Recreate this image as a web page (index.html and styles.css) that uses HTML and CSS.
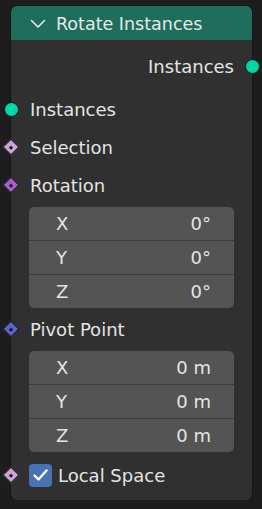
FILE: index.html
```html
<!DOCTYPE html>
<html lang="en">
<head>
    <meta charset="UTF-8">
    <meta name="viewport" content="width=device-width, initial-scale=1.0">
    <title>Rotate Instances</title>
    <link rel="stylesheet" href="styles.css">
</head>
<body>
    <div class="node">
        <div class="header">
            <svg class="chevron" width="16" height="10" viewBox="0 0 16 10">
                <path d="M1.5 1.5 L8 8 L14.5 1.5" fill="none" stroke="#e8e8e8" stroke-width="1.6" stroke-linecap="round" stroke-linejoin="round"/>
            </svg>
            <span class="title">Rotate Instances</span>
        </div>

        <div class="row output">
            <span>Instances</span>
            <span class="socket circle right"></span>
        </div>

        <div class="row first-input">
            <span class="socket circle left"></span>
            <span>Instances</span>
        </div>

        <div class="row">
            <span class="socket diamond left bool"></span>
            <span>Selection</span>
        </div>

        <div class="row">
            <span class="socket diamond left rot"></span>
            <span>Rotation</span>
        </div>

        <div class="fields">
            <div class="field"><span>X</span><span>0°</span></div>
            <div class="field"><span>Y</span><span>0°</span></div>
            <div class="field"><span>Z</span><span>0°</span></div>
        </div>

        <div class="row after-box">
            <span class="socket diamond left vec"></span>
            <span>Pivot Point</span>
        </div>

        <div class="fields">
            <div class="field"><span>X</span><span>0 m</span></div>
            <div class="field"><span>Y</span><span>0 m</span></div>
            <div class="field"><span>Z</span><span>0 m</span></div>
        </div>

        <div class="row check-row">
            <span class="socket diamond left bool"></span>
            <span class="checkbox">
                <svg width="17" height="14" viewBox="0 0 17 14">
                    <path d="M2.5 7.5 L6.5 11.5 L14.5 2.5" fill="none" stroke="#fff" stroke-width="2.4" stroke-linecap="round" stroke-linejoin="round"/>
                </svg>
            </span>
            <span>Local Space</span>
        </div>
    </div>
</body>
</html>
```

FILE: styles.css
```css
body {
    margin: 0;
    background-color: #1d1d1d;
    font-family: "DejaVu Sans", sans-serif;
    font-size: 18px;
    color: #e4e4e4;
}
.node {
    position: relative;
    margin: 6px 0 0 11px;
    width: 241px;
    height: 494px;
    box-sizing: border-box;
    background-color: #303030;
    border-radius: 6px;
    box-shadow: 0 0 0 1px #151515;
}
.header {
    height: 34px;
    background-color: #1f6e5b;
    border-radius: 6px 6px 0 0;
    display: flex;
    align-items: center;
    padding-left: 19px;
    box-sizing: border-box;
}
.chevron {
    margin-right: 10px;
    margin-top: 1px;
}
.title {
    font-size: 17.5px;
    color: #e8e8e8;
    margin-top: 2px;
}
.row {
    position: relative;
    height: 38px;
    display: flex;
    align-items: center;
    padding-left: 19px;
}
.row.output {
    margin-top: 7px;
    justify-content: flex-end;
    padding-right: 18px;
}
.row.first-input {
    margin-top: 5px;
}
.row.after-box {
    margin-top: 2px;
}
.row.check-row {
    margin-top: 4px;
    padding-left: 18px;
}
.socket {
    position: absolute;
    top: 50%;
    box-sizing: border-box;
}
.socket.circle {
    width: 15px;
    height: 15px;
    margin-top: -7.5px;
    border-radius: 50%;
    background-color: #00d6a3;
    border: 1px solid #111;
}
.socket.left.circle {
    left: -7.5px;
}
.socket.right.circle {
    right: -7.5px;
}
.socket.diamond {
    left: -6px;
    width: 12px;
    height: 12px;
    margin-top: -6px;
    transform: rotate(45deg);
    border: 1px solid #151515;
}
.socket.diamond::after {
    content: "";
    position: absolute;
    left: 3.5px;
    top: 3.5px;
    width: 3px;
    height: 3px;
    background-color: #1a1a1a;
}
.bool {
    background-color: #cca6d6;
}
.rot {
    background-color: #a363c7;
}
.vec {
    background-color: #6363c7;
}
.fields {
    margin: 3px 18px 0 18px;
    background-color: #545454;
    border-radius: 5px;
    overflow: hidden;
}
.field {
    height: 33px;
    display: flex;
    align-items: center;
    justify-content: space-between;
    padding: 0 23px 0 27px;
    border-top: 1px solid #3d3d3d;
}
.field:first-child {
    border-top: none;
}
.checkbox {
    width: 23px;
    height: 23px;
    border-radius: 4px;
    background-color: #4772b3;
    display: flex;
    align-items: center;
    justify-content: center;
    margin-right: 6px;
}
```
